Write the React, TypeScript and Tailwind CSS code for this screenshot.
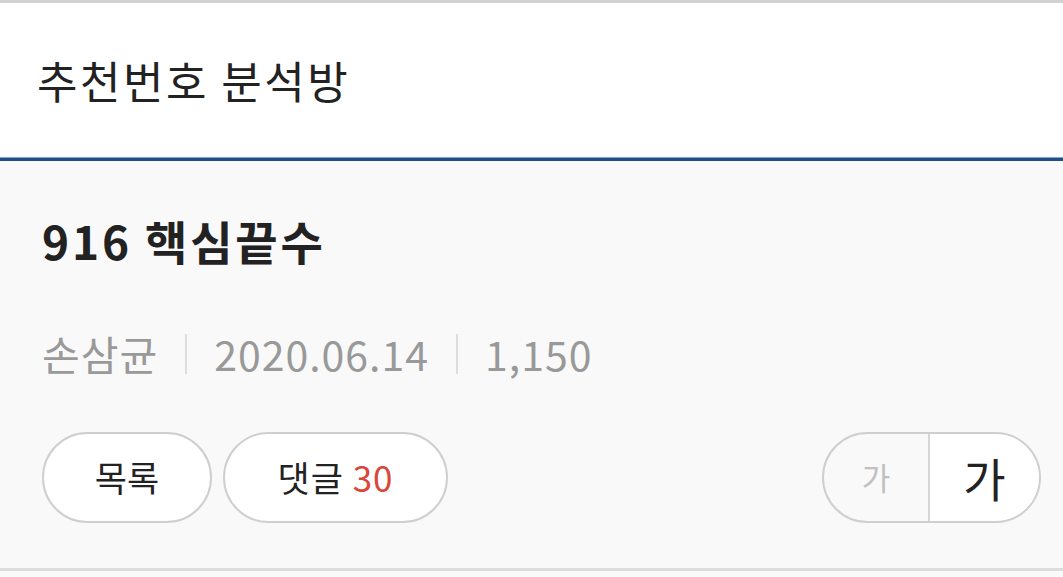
export default function App() {
  const font = { fontFamily: '"Noto Sans CJK KR", "Noto Sans", sans-serif' };
  return (
    <div className="w-[1063px] h-[577px] overflow-hidden bg-[#fafafa]" style={font}>
      <div className="h-[3px] bg-[#d2d2d2]" />
      <header className="h-[154px] bg-white flex items-center px-[37px]">
        <h1 className="text-[44px] leading-none text-[#222] tracking-[2.5px]">추천번호 분석방</h1>
      </header>
      <div className="h-[1px] bg-[#7fa8d6]" />
      <div className="h-[3px] bg-[#1f4f86]" />
      <section className="h-[410px] bg-[#f9f9f9] border-b-[3px] border-[#dcdcdc] px-[42px] pt-[56px]">
        <h2 className="text-[46px] leading-none font-bold text-[#222] tracking-[2.8px]">916 핵심끝수</h2>
        <div className="mt-[70px] flex items-center text-[41px] leading-none text-[#999] tracking-[1px]">
          <span>손삼균</span>
          <span className="mx-[27px] w-[2px] h-[40px] bg-[#dddddd]" />
          <span>2020.06.14</span>
          <span className="mx-[27px] w-[2px] h-[40px] bg-[#dddddd]" />
          <span>1,150</span>
        </div>
        <div className="mt-[58px] flex items-center">
          <button className="w-[170px] h-[91px] rounded-full border-2 border-[#cfcfcf] bg-white text-[35px] text-[#222]">
            목록
          </button>
          <button className="ml-[11px] w-[225px] h-[91px] rounded-full border-2 border-[#cfcfcf] bg-white text-[35px] text-[#222] tracking-[1px]">
            댓글 <span className="text-[#d9473b]">30</span>
          </button>
          <div className="ml-auto mr-[-20px] w-[219px] h-[91px] rounded-full border-2 border-[#cfcfcf] flex overflow-hidden">
            <button className="w-[106px] h-full text-[31px] text-[#c0c0c0] border-r-2 border-[#d6d6d6]">가</button>
            <button className="flex-1 h-full text-[46px] text-[#222] bg-white">가</button>
          </div>
        </div>
      </section>
    </div>
  );
}
